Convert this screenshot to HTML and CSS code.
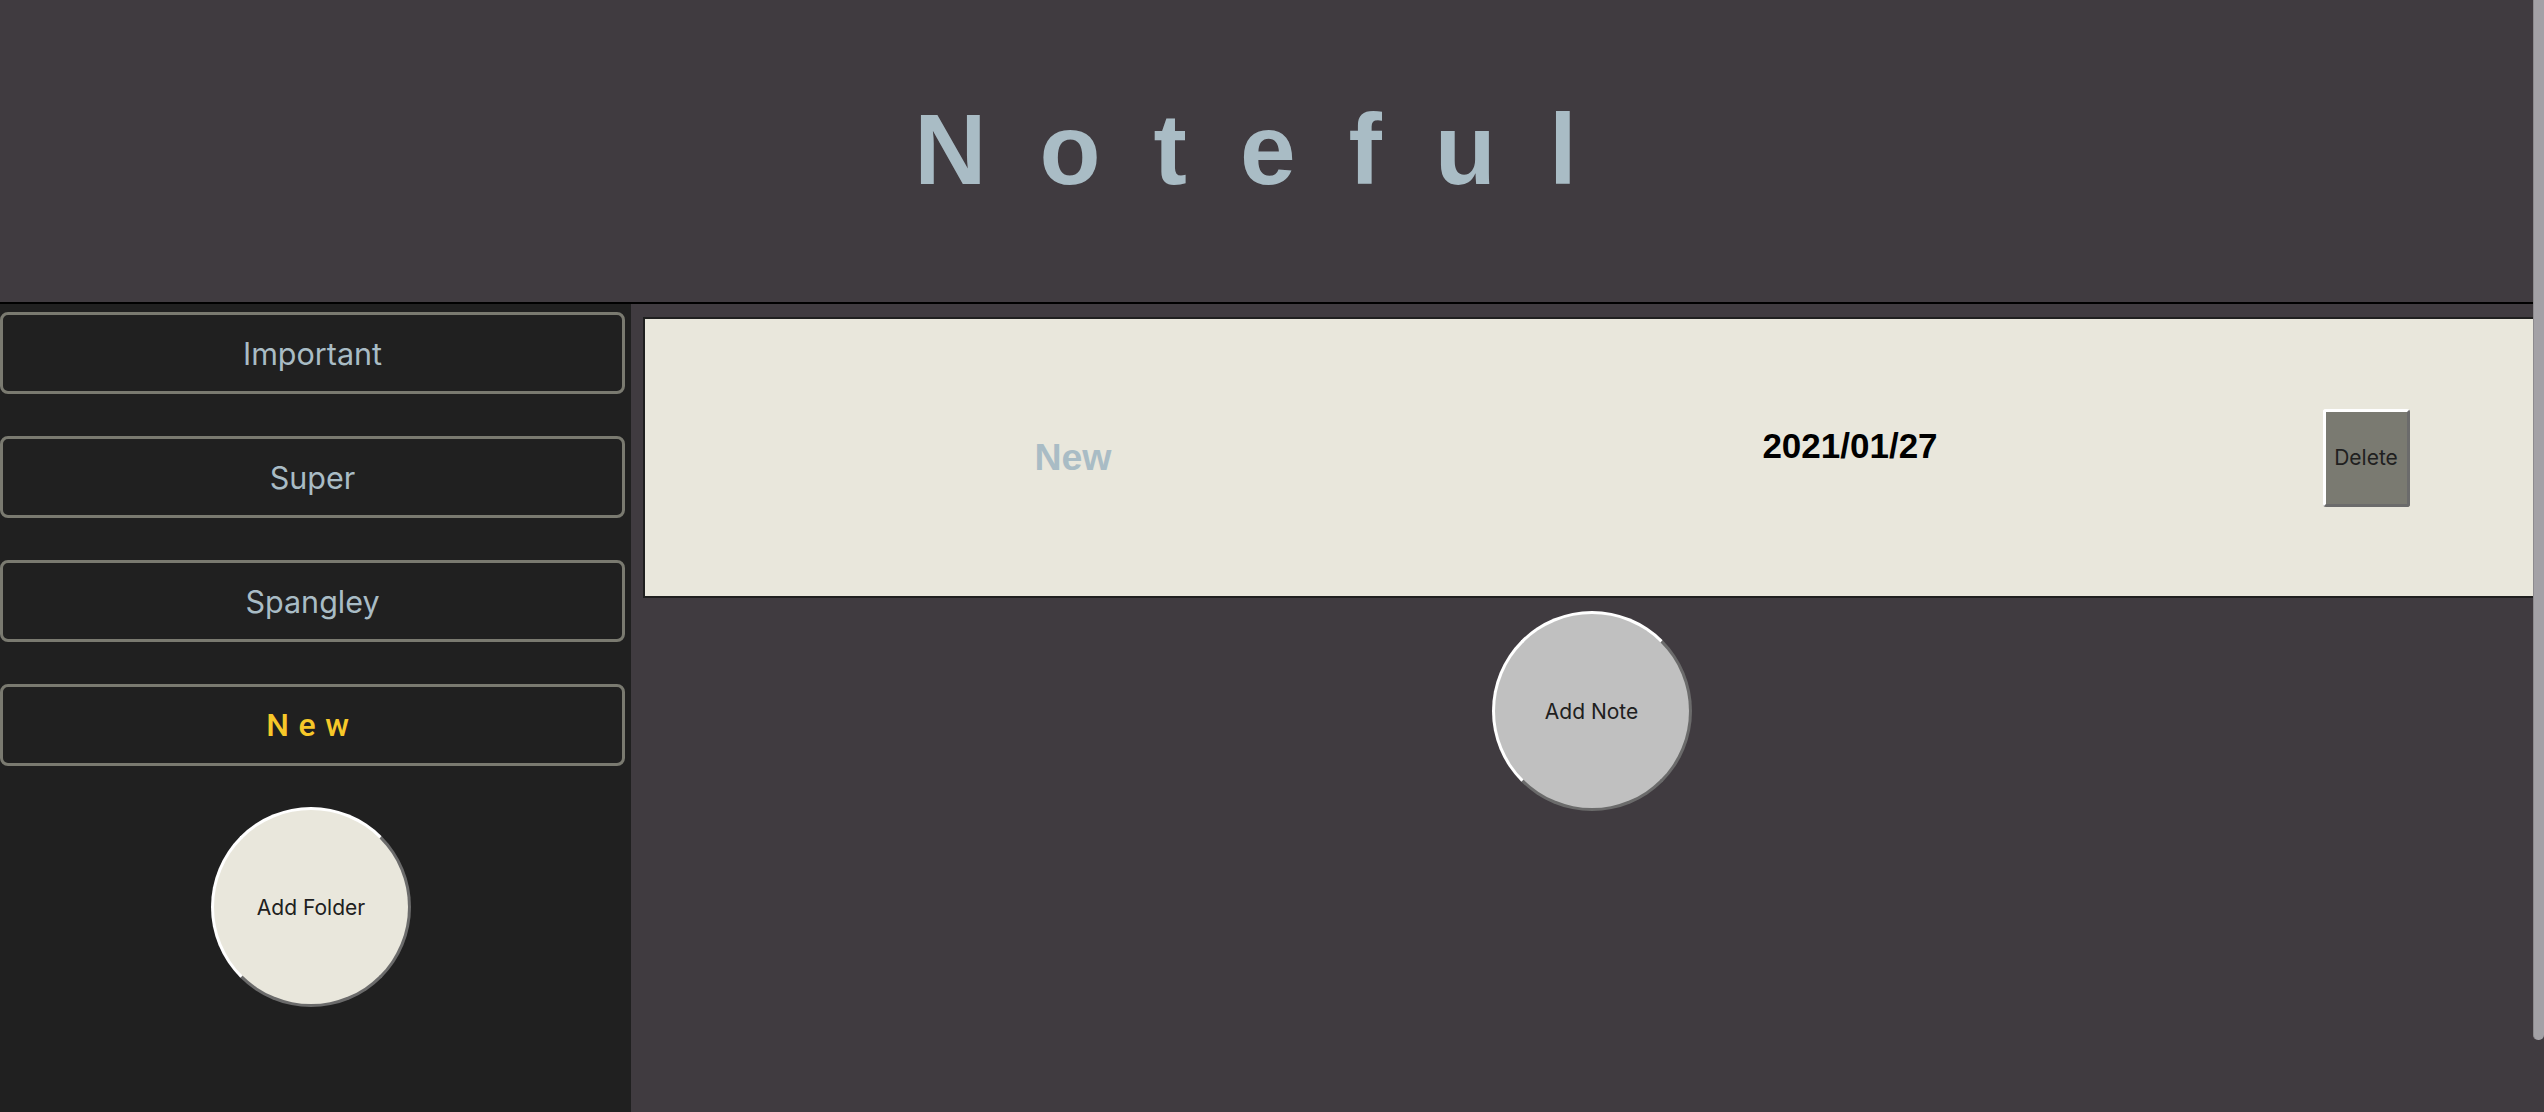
FILE: index.html
```html
<!DOCTYPE html>
<html lang="en">
<head>
<meta charset="utf-8">
<title>Noteful</title>
<link rel="stylesheet" href="styles.css">
</head>
<body>
<div class="app">
  <header class="header">
    <h1 class="title">Noteful</h1>
  </header>
  <div class="layout">
    <nav class="sidebar">
      <ul class="folders">
        <li class="folder">Important</li>
        <li class="folder">Super</li>
        <li class="folder">Spangley</li>
        <li class="folder active">New</li>
      </ul>
      <div class="sidebar-action">
        <button class="circle add-folder">Add Folder</button>
      </div>
    </nav>
    <main class="main">
      <div class="note-card">
        <h2 class="note-title">New</h2>
        <div class="note-date">2021/01/27</div>
        <button class="delete">Delete</button>
      </div>
      <button class="circle add-note">Add Note</button>
    </main>
  </div>
</div>
<div class="scrollbar"></div>
</body>
</html>
```
FILE: styles.css
```css
html, body {
  margin: 0;
  height: 100%;
  overflow: hidden;
  background: #403b40;
}

.app {
  display: flex;
  flex-direction: column;
  height: 100vh;
}

.header {
  height: 304px;
  box-sizing: border-box;
  padding-top: 99px;
  border-bottom: 2px solid #000;
  background: #403b40;
}

.title {
  margin: 0;
  font-family: "Liberation Sans", Arial, sans-serif;
  font-weight: bold;
  font-size: 100px;
  line-height: 100px;
  letter-spacing: 53px;
  color: #a9bcc5;
  text-align: center;
}

.layout {
  display: flex;
  flex: 1;
  min-height: 0;
}

.sidebar {
  width: 631px;
  flex-shrink: 0;
  box-sizing: border-box;
  padding-top: 8px;
  background: #202020;
  display: flex;
  flex-direction: column;
}

.folders {
  list-style: none;
  margin: 0;
  padding: 0;
  width: 625px;
  display: flex;
  flex-direction: column;
  gap: 42px;
}

.folder {
  height: 82px;
  box-sizing: border-box;
  border: 3px solid #7a7a70;
  border-radius: 8px;
  display: flex;
  align-items: center;
  justify-content: center;
  font-family: Inter, "Noto Sans", sans-serif;
  font-size: 30.5px;
  font-weight: 400;
  color: #a9bcc5;
}

.folder.active {
  font-family: Roboto, "Noto Sans", sans-serif;
  font-size: 32px;
  font-weight: 500;
  letter-spacing: 0.3em;
  color: #f7c829;
}

.sidebar-action {
  width: 622px;
  display: flex;
  justify-content: center;
  padding-top: 41px;
}

.circle {
  width: 200px;
  height: 200px;
  box-sizing: border-box;
  padding: 0;
  border-radius: 50%;
  border: 3px solid;
  border-color: #ffffff #6b6b6b #6b6b6b #ffffff;
  font-family: Inter, "Noto Sans", sans-serif;
  font-size: 21px;
  color: #202020;
}

.add-folder {
  background: #e9e7dc;
}

.main {
  flex: 1;
  box-sizing: border-box;
  padding: 13px 4px 0 12px;
  display: flex;
  flex-direction: column;
  align-items: center;
}

.note-card {
  align-self: stretch;
  height: 281px;
  box-sizing: border-box;
  border: 2px solid #1f1f1f;
  background: #e9e7dc;
  display: grid;
  grid-template-columns: 856px 698px 334px 1fr;
  align-items: center;
  justify-items: center;
}

.note-title {
  margin: 0;
  font-family: "Liberation Sans", Arial, sans-serif;
  font-weight: bold;
  font-size: 37.5px;
  color: #a9bcc5;
}

.note-date {
  margin-bottom: 24px;
  font-family: "Liberation Sans", Arial, sans-serif;
  font-weight: bold;
  font-size: 35px;
  color: #000;
}

.delete {
  width: 87px;
  height: 98px;
  box-sizing: border-box;
  padding: 0;
  border: 3px solid;
  border-color: #ffffff #6b6b6b #6b6b6b #ffffff;
  border-radius: 3px;
  background: #7a7a71;
  font-family: Inter, "Noto Sans", sans-serif;
  font-size: 21px;
  color: #202020;
}

.add-note {
  margin-top: 13px;
  background: #c0c0c0;
}

.scrollbar {
  position: fixed;
  top: 0;
  right: 0;
  width: 11px;
  height: 1040px;
  box-sizing: border-box;
  border-left: 1px solid #8c8a8e;
  border-radius: 0 0 5px 5px;
  background: #a3a1a6;
}
```
